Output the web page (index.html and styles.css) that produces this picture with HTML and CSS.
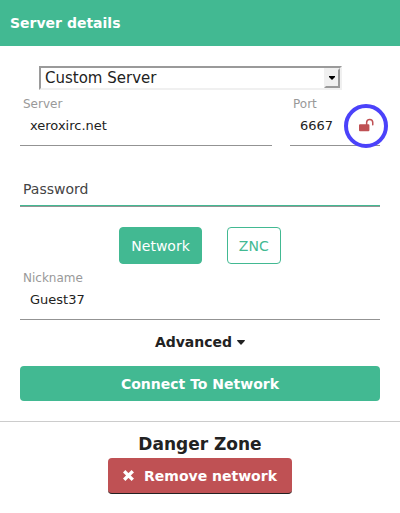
FILE: index.html
```html
<!DOCTYPE html>
<html lang="en">
<head>
<meta charset="utf-8">
<meta name="viewport" content="width=device-width, initial-scale=1">
<title>Server details</title>
<link rel="stylesheet" href="styles.css">
</head>
<body>
<header class="titlebar"><h1 class="title">Server details</h1></header>
<main>
  <form class="settings">
    <div class="preset">
      <select class="preset-select" aria-label="Server preset">
        <option>Custom Server</option>
      </select>
      <span class="preset-arrow"><svg width="6" height="4" viewBox="0 0 6 4"><path d="M0 0h6v1L3 4 0 1z" fill="#000"/></svg></span>
    </div>
    <div class="address">
      <div class="field">
        <label class="label" for="server">Server</label>
        <input class="input" id="server" type="text" value="xeroxirc.net">
      </div>
      <div class="field">
        <label class="label" for="port">Port</label>
        <input class="input" id="port" type="text" value="6667">
        <button class="tls" type="button" aria-label="Toggle secure connection">
          <svg width="16" height="16" viewBox="0 0 16 16"><path d="M2 6.3h5.9V4.6a3.8 3.8 0 0 1 7.6 0v2.2a.6.6 0 0 1-.6.6h-.3a.6.6 0 0 1-.6-.6V4.6a2.3 2.3 0 0 0-4.6 0v1.7h1a1 1 0 0 1 1 1v5a1 1 0 0 1-1 1H2a1 1 0 0 1-1-1v-5a1 1 0 0 1 1-1z" fill="#bf5154"/></svg>
        </button>
      </div>
    </div>
    <div class="field password">
      <input class="input" id="password" type="password" placeholder="Password" aria-label="Password">
    </div>
    <div class="modes">
      <button class="button" type="button">Network</button>
      <button class="button outline" type="button">ZNC</button>
    </div>
    <div class="field">
      <label class="label" for="nickname">Nickname</label>
      <input class="input" id="nickname" type="text" value="Guest37">
    </div>
    <button class="advanced" type="button">Advanced <svg width="8" height="5" viewBox="0 0 8 5"><path d="M.5 0h7q.8.3.2 1L4.5 4.6q-.5.4-1 0L.3 1Q-.3.3.5 0z" fill="#222"/></svg></button>
    <button class="connect" type="submit">Connect To Network</button>
  </form>
  <section class="danger">
    <h2 class="danger-title">Danger Zone</h2>
    <button class="remove" type="button"><svg width="11" height="11" viewBox="0 0 11 11"><path d="M2.4 2.4l6.2 6.2M8.6 2.4L2.4 8.6" stroke="#fff" stroke-width="3.4" stroke-linecap="square"/></svg>Remove network</button>
  </section>
</main>
</body>
</html>
```
FILE: styles.css
```css
* { box-sizing: border-box; }
body {
  margin: 0;
  background: #fff;
  color: #222;
  font-family: "DejaVu Sans", sans-serif;
  font-size: 14px;
}
button, input, select { font: inherit; color: inherit; margin: 0; }
button { cursor: pointer; }
svg { display: block; }

.titlebar { padding: 14px 10px; background: #42b992; color: #fff; }
.title { margin: 0; font-size: 14px; line-height: 18px; }

.settings {
  display: flex;
  flex-direction: column;
  padding: 20px;
  border-bottom: 1px solid #ccc;
}

.preset { position: relative; margin: 0 38px 0 19px; }
.preset-select {
  display: block;
  width: 100%;
  height: 24px;
  padding: 0 20px 0 4px;
  appearance: none;
  border: 2px solid;
  border-color: #9a9a9a #f0f0f0 #f0f0f0 #9a9a9a;
  border-radius: 0;
  background: #fff;
  font-size: 15px;
}
.preset-arrow {
  position: absolute;
  top: 2px;
  right: 2px;
  bottom: 2px;
  width: 16px;
  display: grid;
  place-items: center;
  background: #f0f0f0;
  border: 2px solid;
  border-color: #f0f0f0 #9a9a9a #9a9a9a #f0f0f0;
  pointer-events: none;
}

.address { display: grid; grid-template-columns: 14fr 5fr; gap: 18px; }
.field { position: relative; padding-top: 6px; border-bottom: 1px solid #939393; }
.label {
  display: block;
  padding-left: 3px;
  font-size: 12px;
  line-height: 16px;
  color: #999;
}
.input {
  display: block;
  width: 100%;
  height: 33px;
  padding: 0 10px 6px;
  border: 0;
  outline: 0;
  background: transparent;
  font-size: 13px;
}
.tls {
  position: absolute;
  top: 14px;
  right: -8px;
  width: 44px;
  height: 44px;
  display: grid;
  place-items: center;
  padding: 0;
  border: 4px solid #4b42fa;
  border-radius: 50%;
  background: transparent;
}

.password { margin-top: 20px; border-bottom: 1px solid #939393; }
.password .input {
  height: 34px;
  padding: 0 3px;
  border-bottom: 1px solid #42b992;
  font-size: 14px;
}
.password .input::placeholder { color: #444; opacity: 1; }

.modes { display: flex; justify-content: center; gap: 25px; margin-top: 20px; }
.button {
  height: 37px;
  padding: 0 11px;
  border: 1px solid #42b992;
  border-radius: 4px;
  background: #42b992;
  color: #fff;
}
.outline { background: #fff; color: #42b992; }

.advanced {
  display: flex;
  align-items: center;
  justify-content: center;
  gap: 5px;
  height: 46px;
  padding: 0 0 2px;
  border: 0;
  background: none;
  font-weight: bold;
}
.connect {
  height: 35px;
  border: 0;
  border-radius: 4px;
  background: #42b992;
  color: #fff;
  font-weight: bold;
}

.danger {
  display: flex;
  flex-direction: column;
  align-items: center;
  padding: 12px 20px;
}
.danger-title { margin: 0; font-size: 17px; line-height: 20px; }
.remove {
  display: flex;
  align-items: center;
  gap: 10px;
  height: 36px;
  margin-top: 4px;
  padding: 0 15px;
  border: 0;
  border-bottom: 1px solid #222;
  border-radius: 4px;
  background: #bf5154;
  color: #fff;
  font-weight: bold;
}
```
